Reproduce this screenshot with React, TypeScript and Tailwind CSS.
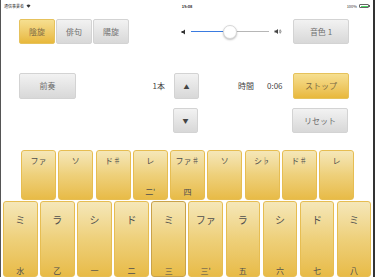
import React from "react";

const FONT = { fontFamily: '"Noto Sans CJK JP", "Noto Sans", sans-serif' };

function GrayBtn({ children, className = "" }: { children?: React.ReactNode; className?: string }) {
  return (
    <div
      className={
        "flex items-center justify-center rounded-[2px] border border-[#d3d3d3] bg-gradient-to-b from-[#f2f2f2] to-[#d8d8d8] text-[8px] text-[#6e6e6e] " +
        className
      }
    >
      {children}
    </div>
  );
}

function GoldBtn({ children, className = "" }: { children?: React.ReactNode; className?: string }) {
  return (
    <div
      className={
        "flex items-center justify-center rounded-[2px] border border-[#e6c25c] bg-gradient-to-b from-[#f6df90] to-[#e8b83a] text-[8px] text-[#7b6a45] " +
        className
      }
    >
      {children}
    </div>
  );
}

const topKeys: [string, string][] = [
  ["ファ", ""],
  ["ソ", ""],
  ["ド♯", ""],
  ["レ", "二'"],
  ["ファ♯", "四"],
  ["ソ", ""],
  ["シ♭", ""],
  ["ド♯", ""],
  ["レ", ""],
];

const bottomKeys: [string, string][] = [
  ["ミ", "水"],
  ["ラ", "乙"],
  ["シ", "一"],
  ["ド", "二"],
  ["ミ", "三"],
  ["ファ", "三'"],
  ["ラ", "五"],
  ["シ", "六"],
  ["ド", "七"],
  ["ミ", "八"],
];

export default function App() {
  return (
    <div
      style={FONT}
      className="relative h-[277px] w-[375px] overflow-hidden border-l border-r-2 border-l-[#555] border-r-[#333] bg-white"
    >
      {/* status bar */}
      <div className="flex h-[12px] items-center justify-between px-[3px] text-[4px] text-[#333]">
        <div className="flex w-[60px] items-center gap-[2px]">
          <span>通信事業者</span>
          <svg width="5" height="4" viewBox="0 0 10 8">
            <path d="M5 7.5 L1 3 A6 6 0 0 1 9 3 Z" fill="#333" />
          </svg>
        </div>
        <span className="font-semibold">15:08</span>
        <div className="flex w-[60px] items-center justify-end gap-[2px]">
          <span>100%</span>
          <div className="flex items-center">
            <div className="h-[4px] w-[10px] rounded-[1px] border-[0.5px] border-[#666] p-[0.5px]">
              <div className="h-full w-full bg-[#4cd964]" />
            </div>
            <div className="h-[2px] w-[1px] bg-[#666]" />
          </div>
        </div>
      </div>

      {/* row 1 */}
      <div className="mt-[7px] flex h-[25px] items-center pl-[18px]">
        <div className="flex gap-[1px]">
          <GoldBtn className="h-[25px] w-[36px]">陰旋</GoldBtn>
          <GrayBtn className="h-[25px] w-[36px]">俳句</GrayBtn>
          <GrayBtn className="h-[25px] w-[36px]">陽旋</GrayBtn>
        </div>
        <div className="ml-[52px] flex items-center">
          <svg width="6" height="6" viewBox="0 0 12 12">
            <path d="M1 4 H4 L8 1 V11 L4 8 H1 Z" fill="#333" />
          </svg>
          <div className="relative ml-[4px] flex h-[14px] w-[78px] items-center">
            <div className="h-[1px] w-[39px] bg-[#3a7be0]" />
            <div className="h-[1px] w-[39px] bg-[#b6b6b6]" />
            <div className="absolute left-[32px] top-0 h-[14px] w-[14px] rounded-full border border-[#d8d8d8] bg-white shadow-[0_1px_2px_rgba(0,0,0,0.25)]" />
          </div>
          <svg className="ml-[5px]" width="9" height="7" viewBox="0 0 18 14">
            <path d="M1 5 H4 L8 2 V12 L4 9 H1 Z" fill="#444" />
            <path d="M10.5 4.5 Q12.5 7 10.5 9.5" stroke="#444" strokeWidth="1.2" fill="none" />
            <path d="M12.5 3 Q15.5 7 12.5 11" stroke="#444" strokeWidth="1.2" fill="none" />
          </svg>
        </div>
        <GrayBtn className="ml-[10px] h-[25px] w-[56px]">音色 1</GrayBtn>
      </div>

      {/* row 2 */}
      <div className="mt-[29px] flex h-[26px] items-center pl-[18px]">
        <GrayBtn className="h-[26px] w-[57px]">前奏</GrayBtn>
        <div className="w-[89px] text-right text-[8px] text-[#444]">1本</div>
        <GrayBtn className="ml-[9px] h-[26px] w-[25px]">
          <span className="text-[6px] text-[#444]">▲</span>
        </GrayBtn>
        <div className="ml-[39px] w-[29px] text-[8px] text-[#444]">時間</div>
        <div className="w-[26px] text-[8px] text-[#444]">0:06</div>
        <GoldBtn className="h-[26px] w-[56px]">ストップ</GoldBtn>
      </div>

      {/* row 3 */}
      <div className="mt-[9px] flex h-[25px] items-center pl-[172px]">
        <GrayBtn className="h-[25px] w-[25px]">
          <span className="text-[6px] text-[#444]">▼</span>
        </GrayBtn>
        <GrayBtn className="ml-[94px] h-[25px] w-[56px]">リセット</GrayBtn>
      </div>

      {/* top key row */}
      <div className="mt-[17px] flex h-[50px] gap-[2.25px] pl-[20px]">
        {topKeys.map(([l, s], i) => (
          <div
            key={i}
            className="flex h-[50px] w-[35px] flex-col items-center justify-between rounded-[3px] border border-[#e6bd52] bg-gradient-to-b from-[#f5e7b8] via-[#eed07a] to-[#e8bb46] pb-[2px] pt-[5px] text-[#4e4e4e]"
          >
            <span className="text-[8px] leading-[10px]">{l}</span>
            <span className="text-[8px] leading-[10px]">{s}</span>
          </div>
        ))}
      </div>

      {/* bottom key row */}
      <div className="mt-[1px] flex gap-[2.6px] pl-[2px]">
        {bottomKeys.map(([l, s], i) => (
          <div
            key={i}
            className={
              "flex h-[76px] w-[34.5px] shrink-0 flex-col items-center justify-between rounded-[3px] border bg-gradient-to-b from-[#f5e7b8] via-[#eed07a] to-[#e8bb46] pb-[0px] pt-[12px] text-[#4e4e4e] " +
              (i === 4 ? "border-[#c9a24a]" : "border-[#e6bd52]")
            }
          >
            <span className="text-[10px] leading-[12px]">{l}</span>
            <span className="text-[8px] leading-[10px]">{s}</span>
          </div>
        ))}
      </div>
    </div>
  );
}
